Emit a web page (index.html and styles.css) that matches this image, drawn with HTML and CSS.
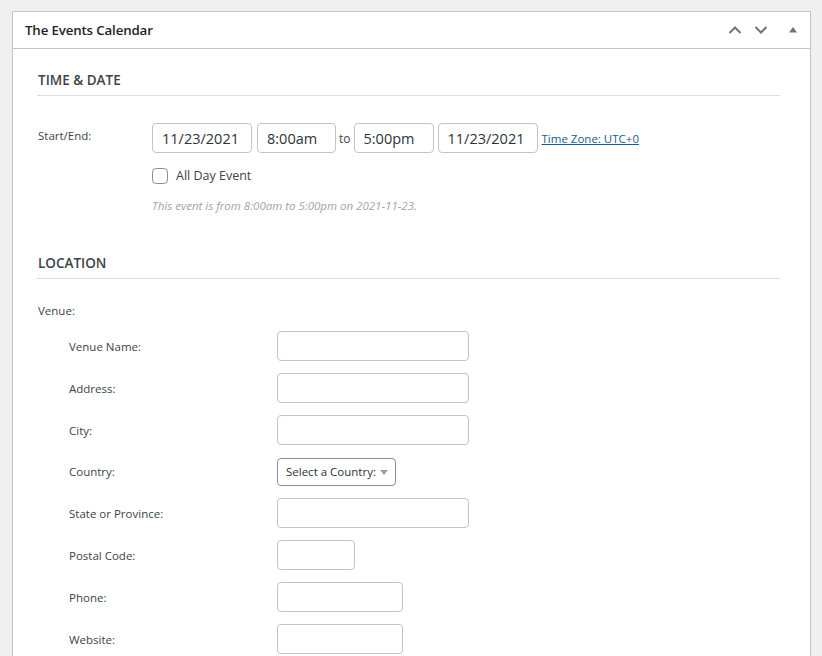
FILE: index.html
```html
<!DOCTYPE html>
<html>
<head>
<meta charset="utf-8">
<link rel="stylesheet" href="styles.css">
</head>
<body>
<div class="panel">
  <div class="panel-head">
    <h2 class="panel-title">The Events Calendar</h2>
    <div class="panel-actions">
      <svg class="ico" width="14" height="10" viewBox="0 0 14 10"><path d="M1.5 8 L7 2.5 L12.5 8" fill="none" stroke="#6f747a" stroke-width="2"/></svg>
      <svg class="ico" width="14" height="10" viewBox="0 0 14 10"><path d="M1.5 2 L7 7.5 L12.5 2" fill="none" stroke="#6f747a" stroke-width="2"/></svg>
      <svg class="ico tri" width="10" height="10" viewBox="0 0 10 10"><path d="M1 7.5 L5 2 L9 7.5 Z" fill="#6f747a"/></svg>
    </div>
  </div>
  <div class="panel-body">
    <section class="sect">
      <h3 class="sect-title">TIME &amp; DATE</h3>
      <div class="dt-row">
        <div class="dt-label">Start/End:</div>
        <div class="dt-fields">
          <div class="dt-inputs">
            <input class="inp w-date" type="text" value="11/23/2021">
            <input class="inp w-time" type="text" value="8:00am">
            <span class="to">to</span>
            <input class="inp w-time2" type="text" value="5:00pm">
            <input class="inp w-date w-date2" type="text" value="11/23/2021">
            <a class="tz" href="#">Time Zone: UTC+0</a>
          </div>
          <label class="allday"><span class="cb"></span>All Day Event</label>
          <p class="note">This event is from 8:00am to 5:00pm on 2021-11-23.</p>
        </div>
      </div>
    </section>
    <section class="sect loc">
      <h3 class="sect-title">LOCATION</h3>
      <div class="venue">Venue:</div>
      <div class="frow"><label class="flabel">Venue Name:</label><input class="inp fi w-l" type="text"></div>
      <div class="frow"><label class="flabel">Address:</label><input class="inp fi w-l" type="text"></div>
      <div class="frow"><label class="flabel">City:</label><input class="inp fi w-l" type="text"></div>
      <div class="frow frow-sel"><label class="flabel">Country:</label><div class="sel">Select a Country:<span class="caret"></span></div></div>
      <div class="frow"><label class="flabel">State or Province:</label><input class="inp fi w-l" type="text"></div>
      <div class="frow"><label class="flabel">Postal Code:</label><input class="inp fi w-s" type="text"></div>
      <div class="frow"><label class="flabel">Phone:</label><input class="inp fi w-m" type="text"></div>
      <div class="frow"><label class="flabel">Website:</label><input class="inp fi w-m" type="text"></div>
    </section>
  </div>
</div>
</body>
</html>
```

FILE: styles.css
```css
* { box-sizing: border-box; }
html, body { margin: 0; padding: 0; }
body {
  background: #f0f0f1;
  font-family: "Open Sans", "Noto Sans", sans-serif;
  color: #3c434a;
  padding: 11px 11px 0 12px;
  height: 656px;
  overflow: hidden;
}
.panel {
  background: #fff;
  border: 1px solid #c3c4c7;
  border-bottom: none;
  height: 645px;
  overflow: hidden;
}
.panel-head {
  height: 37px;
  border-bottom: 1px solid #c3c4c7;
  display: flex;
  align-items: center;
  justify-content: space-between;
  padding: 0 12px 0 12px;
}
.panel-title {
  margin: 0;
  font-size: 13.3px;
  font-weight: 600;
  color: #1d2327;
  letter-spacing: -0.15px;
}
.panel-actions { display: flex; align-items: center; gap: 12px; }
.ico { display: block; }
.tri { margin-left: 8px; }
.panel-body { padding: 0 30px 0 24px; }
.sect-title {
  margin: 0;
  font-size: 13.5px;
  font-weight: 600;
  color: #3c434a;
  border-bottom: 1px solid #dcdcde;
  padding: 0 0 5px 1px;
  height: 47px;
  line-height: 20px;
  display: flex;
  align-items: flex-end;
}
.dt-row { display: flex; margin-top: 27px; }
.dt-label {
  width: 115px;
  flex: none;
  font-size: 11.5px;
  padding-left: 1px;
  line-height: 26px;
}
.dt-inputs { display: flex; align-items: center; }
.inp {
  height: 30px;
  border: 1px solid #c3c4c7;
  border-radius: 4px;
  font-family: inherit;
  font-size: 14.5px;
  color: #2c3338;
  padding: 0 9px;
  background: #fff;
  outline: none;
}
.w-date { width: 100px; }
.w-time { width: 79px; margin-left: 5px; }
.w-time2 { width: 80px; }
.w-date2 { margin-left: 4px; }
.to { font-size: 12px; margin: 0 3px 0 3px; }
.tz {
  font-size: 11.5px;
  color: #135e96;
  text-decoration: underline;
  margin-left: 4px;
}
.allday {
  display: flex;
  align-items: center;
  font-size: 12.5px;
  margin-top: 14px;
  color: #3c434a;
}
.cb {
  width: 16px;
  height: 16px;
  border: 1px solid #8c8f94;
  border-radius: 4px;
  margin-right: 8px;
}
.note {
  margin: 14px 0 0 0;
  font-size: 11.5px;
  font-style: italic;
  color: #a0a5aa;
}
.loc { margin-top: 18px; }
.loc .sect-title { height: 48px; }
.venue { font-size: 11.5px; margin-top: 24px; padding-left: 1px; line-height: 16px; }
.frow {
  display: flex;
  align-items: center;
  height: 30px;
  margin-top: 12px;
}
.frow-sel { height: 29px; }
.flabel {
  width: 240px;
  flex: none;
  padding-left: 32px;
  font-size: 11.5px;
}
.w-l { width: 192px; }
.w-m { width: 126px; }
.w-s { width: 78px; }
.sel {
  height: 28px;
  width: 119px;
  border: 1px solid #8c8f94;
  border-radius: 4px;
  font-size: 11.5px;
  color: #2c3338;
  display: flex;
  align-items: center;
  padding-left: 8px;
  position: relative;
}
.caret {
  position: absolute;
  right: 7px;
  top: 11px;
  width: 0;
  height: 0;
  border-left: 4px solid transparent;
  border-right: 4px solid transparent;
  border-top: 5px solid #9a9ea3;
}
```
